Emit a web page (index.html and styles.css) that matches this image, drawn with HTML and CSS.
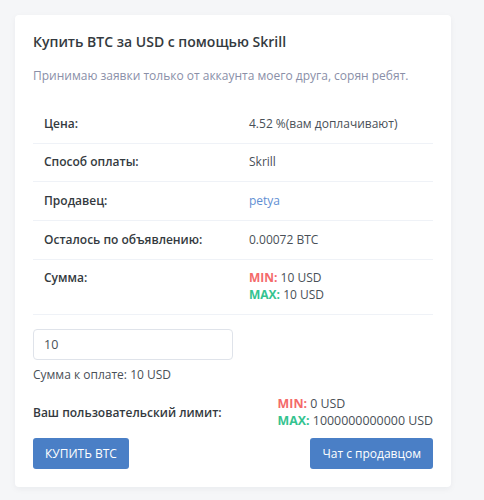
FILE: index.html
```html
<!DOCTYPE html>
<html lang="ru">
<head>
<meta charset="utf-8">
<title>Купить BTC</title>
<link rel="stylesheet" href="styles.css">
</head>
<body>
<div class="card">
  <h4 class="card-title">Купить BTC за USD с помощью Skrill</h4>
  <p class="card-desc">Принимаю заявки только от аккаунта моего друга, сорян ребят.</p>
  <table class="info">
    <tr><th>Цена:</th><td>4.52 %(вам доплачивают)</td></tr>
    <tr><th>Способ оплаты:</th><td>Skrill</td></tr>
    <tr><th>Продавец:</th><td><a href="#" class="link">petya</a></td></tr>
    <tr><th>Осталось по объявлению:</th><td>0.00072 BTC</td></tr>
    <tr><th>Сумма:</th><td><div><b class="min">MIN:</b> 10 USD</div><div><b class="max">MAX:</b> 10 USD</div></td></tr>
  </table>
  <input class="amount" type="text" value="10">
  <div class="to-pay">Сумма к оплате: 10 USD</div>
  <div class="limit">
    <div class="limit-label">Ваш пользовательский лимит:</div>
    <div class="limit-values">
      <div><b class="min">MIN:</b> 0 USD</div>
      <div><b class="max">MAX:</b> 1000000000000 USD</div>
    </div>
  </div>
  <div class="actions">
    <button class="btn">КУПИТЬ BTC</button>
    <button class="btn">Чат с продавцом</button>
  </div>
</div>
</body>
</html>
```
FILE: styles.css
```css
html, body {
  margin: 0;
  padding: 0;
  background: #f5f6f8;
}
body {
  padding: 15px;
  font-family: "Open Sans", "DejaVu Sans", sans-serif;
  font-size: 12px;
  color: #495057;
}
.card {
  width: 436px;
  box-sizing: border-box;
  background: #fff;
  border-radius: 4px;
  box-shadow: 0 2px 6px rgba(18, 38, 63, 0.05);
  padding: 18px;
}
.card-title {
  margin: 0;
  font-size: 14px;
  line-height: 18px;
  font-weight: 600;
  color: #343a40;
}
.card-desc {
  margin: 16px 0 20px;
  font-size: 12px;
  line-height: 18px;
  color: #8a8fa8;
}
.info {
  width: 100%;
  border-collapse: collapse;
}
.info th, .info td {
  text-align: left;
  vertical-align: top;
  padding: 10.5px 11px;
  line-height: 16.7px;
  border-bottom: 1px solid #eff2f7;
}
.info td {
  padding-left: 0;
}
.info th {
  width: 194px;
  font-weight: 600;
  color: #343a40;
}
.link {
  color: #5f8fd3;
  text-decoration: none;
}
.min { color: #f46a6a; font-weight: 700; }
.max { color: #34c38f; font-weight: 700; }
.amount {
  display: block;
  margin-top: 14px;
  width: 200px;
  height: 31px;
  box-sizing: border-box;
  border: 1px solid #dfe3ea;
  border-radius: 4px;
  padding: 0 10px;
  font: inherit;
  font-size: 12.5px;
  color: #495057;
  outline: none;
}
.to-pay {
  margin-top: 7px;
  line-height: 16px;
}
.limit {
  margin-top: 13px;
  display: flex;
  justify-content: space-between;
  align-items: center;
}
.limit-label {
  font-weight: 600;
  font-size: 12px;
  color: #343a40;
}
.limit-values {
  font-size: 12.4px;
  line-height: 16.7px;
}
.actions {
  margin-top: 8px;
  display: flex;
  justify-content: space-between;
}
.btn {
  height: 31px;
  padding: 0 12px;
  border: none;
  border-radius: 3px;
  background: #4a7fc6;
  color: #fff;
  font: inherit;
  font-size: 12px;
}
```
